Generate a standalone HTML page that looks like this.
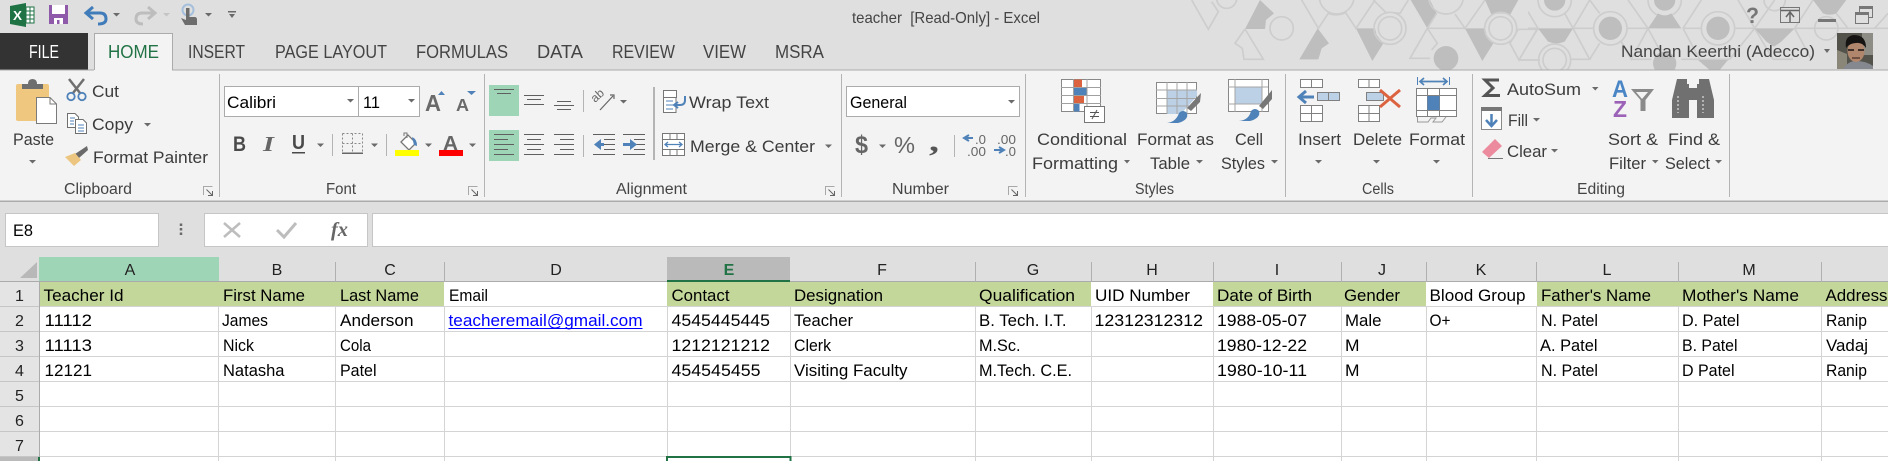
<!DOCTYPE html>
<html><head><meta charset="utf-8"><style>
html,body{margin:0;padding:0;background:#fff;width:1888px;height:461px;overflow:hidden}
svg{display:block;position:absolute;left:0;top:0}
text{font-family:"Liberation Sans",sans-serif;white-space:pre}
.r{font-size:17px;fill:#3c3c3c}
.g{font-size:15.5px;fill:#444}
.t{font-size:18px;fill:#444}
.c{font-size:17px;fill:#000}
.h{font-size:16px;fill:#222;text-anchor:middle}
</style></head><body>
<svg width="1888" height="461" viewBox="0 0 1888 461" xmlns="http://www.w3.org/2000/svg">
<rect width="1888" height="461" fill="#fff"/>
<rect width="1888" height="70" fill="#dfdfdf"/>

<!-- title pattern left -->
<svg x="1180" y="0" width="360" height="70" viewBox="0 0 1080 210">
<g fill="#bebebe">
<path d="M240 0L282 40L258 60L255 87H195ZM413 85L447 130L425 145L415 178H358ZM528 85H585L590 105L610 130L577 183ZM692 0H750L770 40L742 85ZM855 85H915L920 105L940 130L907 183ZM915 0H1015L990 45Q962 35 935 45Z"/>
<circle cx="798" cy="175" r="37"/>
</g>
<g fill="none" stroke="#cdcdcd" stroke-width="5">
<path d="M35 0L85 88L115 35L95 5M195 87L165 130L187 145L192 178H250L195 87M365 0L415 85L445 40Q470 50 497 38L528 85L585 0M580 0L620 40M640 38Q660 40 660 40L685 0M742 85H855M742 85L690 175H750M742 85L772 130L755 150M770 40L742 85M825 42L855 85L915 0M1015 88H1080M1015 88L990 130L1017 180L1070 90M1017 180H1080"/>
<circle cx="140" cy="-5" r="30"/>
<circle cx="305" cy="85" r="35"/>
<circle cx="470" cy="-10" r="52"/>
<circle cx="630" cy="85" r="35"/>
<circle cx="630" cy="85" r="48"/>
<circle cx="798" cy="-10" r="52"/>
<circle cx="962" cy="85" r="35"/>
<circle cx="962" cy="85" r="48"/>
</g>
</svg>
<!-- title pattern right -->
<svg x="1528" y="0" width="360" height="70" viewBox="0 0 1080 210">
<g fill="none" stroke="#cdcdcd" stroke-width="5">
<path d="M0 85H30M135 85H197M297 85H360M465 85H520M620 85H680M800 85H1080M30 85L0 35M30 85L0 135M135 85L110 40M135 85L185 0M135 85L185 178H125M185 178L215 130M185 0L215 40M280 125L310 178L360 85L410 178M310 178H370M300 0L360 85M465 85L520 0M465 85L515 178H460M515 178H605M605 178L680 85L735 178M735 178H795M630 0L680 85L740 0M800 85L850 178M800 85L855 0M925 40L960 85M1040 85L1080 40"/>
<circle cx="80" cy="0" r="50"/>
<circle cx="80" cy="180" r="35"/>
<circle cx="80" cy="180" r="48"/>
<circle cx="247" cy="85" r="50"/>
<circle cx="410" cy="0" r="50"/>
<circle cx="570" cy="85" r="50"/>
<circle cx="740" cy="0" r="32"/>
<circle cx="895" cy="85" r="35"/>
</g>
<g fill="#bebebe">
<circle cx="80" cy="0" r="32"/>
<circle cx="247" cy="85" r="35"/>
<circle cx="410" cy="0" r="32"/>
<circle cx="410" cy="190" r="35"/>
<circle cx="570" cy="85" r="35"/>
<path d="M30 85H135L110 125Q85 135 60 125ZM360 85H460L430 40Q410 52 390 40ZM680 85H800L760 125L738 140L715 125ZM855 0H955L925 40Q905 48 885 40ZM510 180H600L575 210H545Z"/>
</g>
</svg>

<!-- QAT -->
<path d="M10 6L26 3V27L10 24Z" fill="#1f7244"/>
<rect x="26" y="7" width="8" height="16" fill="#fff" stroke="#1f7244"/>
<path d="M26 11H34M26 15H34M26 19H34M30 7V23" stroke="#1f7244"/>
<text x="13" y="20" style="font-size:13px;font-weight:bold;fill:#fff" textLength="9" lengthAdjust="spacingAndGlyphs">X</text>
<rect x="49" y="5" width="19" height="19" fill="#8f5aa9"/>
<rect x="52" y="5" width="13" height="9" fill="#fff"/>
<rect x="54" y="18" width="9" height="6" fill="#fff"/><rect x="57" y="20" width="2.5" height="4" fill="#8f5aa9"/>
<path d="M93 7L86 13L93 19M87 13H100Q106 13 106 19Q106 24 98 24" fill="none" stroke="#3f7cb9" stroke-width="3"/>
<path d="M148 7L155 13L148 19M154 13H142Q136 13 136 19Q136 24 143 24" fill="none" stroke="#bdbdbd" stroke-width="3"/>
<circle cx="188" cy="10" r="5.5" fill="none" stroke="#a5c0dc" stroke-width="2"/>
<path d="M186 8h3.5v9h5q2.500 0 2.500 2.500V25H185L181 18L186 20Z" fill="#6d6d6d"/>
<rect x="228" y="11" width="8" height="1.500" fill="#6a6a6a"/>

<!-- tabs -->
<rect y="33" width="88" height="37" fill="#333"/>
<path d="M94.500 70V33.500H172.500V70" fill="#f3f3f3" stroke="#ababab"/>
<text class="t" x="29" y="58" textLength="30" lengthAdjust="spacingAndGlyphs" style="fill:#fff">FILE</text>
<text class="t" x="108" y="58" textLength="51" lengthAdjust="spacingAndGlyphs" style="fill:#217346">HOME</text>
<text class="t" x="188" y="58" textLength="57" lengthAdjust="spacingAndGlyphs">INSERT</text>
<text class="t" x="275" y="58" textLength="112" lengthAdjust="spacingAndGlyphs">PAGE LAYOUT</text>
<text class="t" x="416" y="58" textLength="92" lengthAdjust="spacingAndGlyphs">FORMULAS</text>
<text class="t" x="537" y="58" textLength="46" lengthAdjust="spacingAndGlyphs">DATA</text>
<text class="t" x="612" y="58" textLength="63" lengthAdjust="spacingAndGlyphs">REVIEW</text>
<text class="t" x="703" y="58" textLength="43" lengthAdjust="spacingAndGlyphs">VIEW</text>
<text class="t" x="775" y="58" textLength="49" lengthAdjust="spacingAndGlyphs">MSRA</text>

<text x="852" y="23" style="font-size:16px;fill:#444" textLength="188" lengthAdjust="spacingAndGlyphs">teacher  [Read-Only] - Excel</text>

<!-- window controls -->
<text x="1746" y="23" style="font-size:22px;font-weight:bold;fill:#777" textLength="13" lengthAdjust="spacingAndGlyphs">?</text>
<rect x="1780.500" y="7.500" width="19" height="15" fill="none" stroke="#777"/>
<path d="M1781 10.500H1799M1790 22V13M1786 17L1790 12L1794 17" fill="none" stroke="#666" stroke-width="1.500"/>
<rect x="1818" y="19" width="18" height="3" fill="#777"/>
<rect x="1859.500" y="6.500" width="13" height="11" fill="none" stroke="#777"/><rect x="1859" y="6" width="14" height="3" fill="#777"/>
<rect x="1855.500" y="12.500" width="13" height="11" fill="#dfdfdf" stroke="#777"/><rect x="1855" y="12" width="14" height="3" fill="#777"/>
<text x="1621" y="57" style="font-size:17px;fill:#444" textLength="194" lengthAdjust="spacingAndGlyphs">Nandan Keerthi (Adecco)</text>
<!-- avatar -->
<rect x="1837" y="33" width="36" height="36" fill="#54534b"/>
<rect x="1862" y="33" width="11" height="22" fill="#8d8d85"/>
<path d="M1837 50L1847 54V69H1837Z" fill="#8a8778"/>
<path d="M1843 69Q1848 61 1856 61Q1866 61 1873 66V69Z" fill="#85898f"/>
<ellipse cx="1856" cy="51" rx="8.500" ry="11" fill="#b0866c"/>
<path d="M1846 48Q1844 36 1854 35Q1866 35 1866 48Q1862 42 1856 43Q1850 43 1846 48Z" fill="#161412"/>
<path d="M1848 50H1854M1858 50H1864" stroke="#3c3028" stroke-width="2"/>
<path d="M1852 58H1860" stroke="#5d3f30" stroke-width="1.500"/>

<!-- ribbon -->
<rect y="70" width="1888" height="131" fill="#f3f3f3"/>
<rect x="172" y="69.500" width="1716" height="1" fill="#ababab"/>
<rect x="0" y="69.500" width="94" height="1" fill="#ababab"/>
<rect x="95" y="69" width="77" height="2" fill="#f3f3f3"/>
<rect y="200.500" width="1888" height="1.500" fill="#ababab"/>
<path d="M219.500 74V197M484.500 74V197M841.500 74V197M1025.500 74V197M1285.500 74V197M1472.500 74V197M1729.500 74V197" stroke="#b4b4b4"/>

<!-- clipboard group -->
<rect x="16" y="84" width="33" height="37" rx="2" fill="#efc77f"/>
<path d="M22 84H28Q28 79 32.500 79Q37 79 37 84H43V89H22Z" fill="#6e6e6e"/>
<path d="M36.500 97.500H50L56.500 104V123.500H36.500Z" fill="#fff" stroke="#7a7a7a"/>
<path d="M50 97.500V104H56.500" fill="none" stroke="#7a7a7a"/>
<text class="r" x="13" y="145" textLength="41" lengthAdjust="spacingAndGlyphs">Paste</text>
<path d="M73 93L84 79M80 93L69 79" stroke="#6f6f6f" stroke-width="2.500"/>
<circle cx="71" cy="96.500" r="3.700" fill="none" stroke="#4f82b8" stroke-width="1.800"/>
<circle cx="82" cy="96.500" r="3.700" fill="none" stroke="#4f82b8" stroke-width="1.800"/>
<text class="r" x="92" y="97" textLength="27" lengthAdjust="spacingAndGlyphs">Cut</text>
<path d="M67.500 113.500H75L78.500 117V127.500H67.500Z" fill="#fff" stroke="#6f6f6f"/>
<path d="M75.500 119.500H83L86.500 123V133.500H75.500Z" fill="#fff" stroke="#6f6f6f"/>
<path d="M70 118H75M70 121H74M70 124H74M78 125H84M78 128H84M78 131H84" stroke="#4f82b8"/>
<text class="r" x="92" y="130" textLength="41" lengthAdjust="spacingAndGlyphs">Copy</text>
<path d="M87 146L88 150L79 158L75 154Z" fill="#6a6a6a"/>
<path d="M65 157L75 153L81 160L74 166Z" fill="#ecc680"/>
<text class="r" x="93" y="163" textLength="115" lengthAdjust="spacingAndGlyphs">Format Painter</text>
<text class="g" x="64" y="194" textLength="68" lengthAdjust="spacingAndGlyphs">Clipboard</text>

<!-- font group -->
<rect x="224.500" y="86.500" width="134" height="30" fill="#fff" stroke="#ababab"/>
<rect x="358.500" y="86.500" width="61" height="30" fill="#fff" stroke="#ababab"/>
<text class="c" x="227" y="108" textLength="49" lengthAdjust="spacingAndGlyphs">Calibri</text>
<text class="c" x="363" y="108" textLength="17" lengthAdjust="spacingAndGlyphs">11</text>
<text x="425" y="111" style="font-size:23px;font-weight:bold;fill:#6a6a6a" textLength="16" lengthAdjust="spacingAndGlyphs">A</text>
<text x="456" y="111" style="font-size:17.500px;font-weight:bold;fill:#6a6a6a" textLength="13" lengthAdjust="spacingAndGlyphs">A</text>
<path d="M438 95H445L441.500 91ZM467 91H476L471.500 95Z" fill="#4f82b8"/>
<text x="233" y="151" style="font-size:21px;font-weight:bold;fill:#4a4a4a" textLength="13" lengthAdjust="spacingAndGlyphs">B</text>
<text x="263" y="151" style="font-size:21px;font-weight:bold;font-style:italic;fill:#666;font-family:'Liberation Serif',serif" textLength="11" lengthAdjust="spacingAndGlyphs">I</text>
<text x="292" y="149" style="font-size:20px;font-weight:bold;fill:#4a4a4a" textLength="13" lengthAdjust="spacingAndGlyphs">U</text>
<rect x="292" y="152" width="13" height="1.500" fill="#4a4a4a"/>
<path d="M332.500 134V156M386.500 134V156M583.500 90V112M583.500 135V157M954.500 135V157" stroke="#b4b4b4"/>
<path d="M342.500 133.500H362.500V152M342.500 133.500V152M342.500 143.500H362.500M352.500 133.500V152" fill="none" stroke="#888" stroke-dasharray="2 2"/>
<rect x="342" y="152.500" width="21" height="1.500" fill="#666"/>
<path d="M401 142L408 135L416 143L409 150Z" fill="#fff" stroke="#777" stroke-width="1.300"/>
<path d="M404 136V133H407V138" fill="none" stroke="#777"/>
<path d="M412 137Q417 139 417 146L414 145Z" fill="#4f82b8"/>
<rect x="395" y="150" width="24" height="6" fill="#ff0"/>
<text x="443" y="150" style="font-size:20px;font-weight:bold;fill:#666" textLength="15" lengthAdjust="spacingAndGlyphs">A</text>
<rect x="439" y="150" width="24" height="6" fill="#f00"/>
<text class="g" x="326" y="194" textLength="30" lengthAdjust="spacingAndGlyphs">Font</text>

<!-- alignment group -->
<rect x="489" y="85" width="30" height="31" fill="#9fd5b7"/>
<rect x="489" y="130" width="30" height="31" fill="#9fd5b7"/>
<path fill="none" stroke="#5f5f5f" d="M494 89.500H514M497 93.500H511M524 95.500H544M527 99.500H541M524 104.500H544M557 101.500H571M554 105.500H574M557 109.500H571
M494 134.500H514M494 139.500H508M494 144.500H514M494 149.500H508M494 154.500H514
M524 134.500H544M527 139.500H541M524 144.500H544M527 149.500H541M524 154.500H544
M554 134.500H574M560 139.500H574M554 144.500H574M560 149.500H574M554 154.500H574
M593 134.500H615M604 139.500H615M604 144.500H615M604 149.500H615M593 154.500H615
M623 134.500H645M634 139.500H645M634 144.500H645M634 149.500H645M623 154.500H645"/>
<path d="M601 139L594 144.500L601 150ZM601 143H604V146H601ZM630 139L637 144.500L630 150ZM623 143H630V146H623Z" fill="#4f82b8"/>
<path d="M600 110L613 96M610 95H614V99" fill="none" stroke="#666" stroke-width="1.200"/>
<text x="595" y="103" transform="rotate(-42 595 103)" style="font-size:12px;fill:#666">ab</text>
<rect x="653" y="87" width="2" height="73" fill="#b4b4b4"/>
<path d="M663.500 90.500H676.500V97.500H663.500ZM663.500 97.500H676V112.500H663.500Z" fill="#fff" stroke="#777"/>
<path d="M666 101H673M666 105H673M666 109H673" stroke="#4f82b8"/>
<path d="M685 96V100Q685 105 680 105H675M678 102L674 105L678 108" fill="none" stroke="#4f82b8" stroke-width="2"/>
<text class="r" x="689" y="108" textLength="80" lengthAdjust="spacingAndGlyphs">Wrap Text</text>
<rect x="662.500" y="133.500" width="22" height="22" fill="#fff" stroke="#777"/>
<path d="M662 139.500H685M662 149.500H685M670 133V139M677 133V139M670 150V156M677 150V156" stroke="#777"/>
<path d="M665 144.500H682M668 142L665 144.500L668 147M679 142L682 144.500L679 147" fill="none" stroke="#4f82b8" stroke-width="1.300"/>
<text class="r" x="690" y="152" textLength="125" lengthAdjust="spacingAndGlyphs">Merge &amp; Center</text>
<text class="g" x="616" y="194" textLength="71" lengthAdjust="spacingAndGlyphs">Alignment</text>

<!-- number group -->
<rect x="846.500" y="86.500" width="173" height="30" fill="#fff" stroke="#ababab"/>
<text class="c" x="850" y="108" textLength="57" lengthAdjust="spacingAndGlyphs">General</text>
<text x="855" y="153" style="font-size:25px;font-weight:bold;fill:#666" textLength="13" lengthAdjust="spacingAndGlyphs">$</text>
<text x="894" y="153" style="font-size:23px;fill:#666" textLength="21" lengthAdjust="spacingAndGlyphs">%</text>
<text x="929" y="151" style="font-size:30px;font-weight:bold;fill:#555;font-family:'Liberation Serif',serif" textLength="10" lengthAdjust="spacingAndGlyphs">,</text>
<text x="975" y="144" style="font-size:13px;fill:#666" textLength="11" lengthAdjust="spacingAndGlyphs">.0</text>
<text x="967" y="156" style="font-size:13px;fill:#666" textLength="19" lengthAdjust="spacingAndGlyphs">.00</text>
<text x="997" y="144" style="font-size:13px;fill:#666" textLength="19" lengthAdjust="spacingAndGlyphs">.00</text>
<text x="1005" y="156" style="font-size:13px;fill:#666" textLength="11" lengthAdjust="spacingAndGlyphs">.0</text>
<path d="M969 135L964 138L969 141M964 138H973M999 147L1004 150L999 153M994 150H1003" fill="none" stroke="#4f82b8" stroke-width="2"/>
<text class="g" x="892" y="194" textLength="57" lengthAdjust="spacingAndGlyphs">Number</text>

<!-- styles: conditional formatting -->
<rect x="1061.500" y="79.500" width="39" height="32" fill="#fff" stroke="#888"/>
<rect x="1074" y="79.500" width="8" height="8" fill="#dc6340"/>
<rect x="1074" y="88" width="13" height="7" fill="#4f82b8"/>
<rect x="1074" y="96" width="10" height="7.500" fill="#dc6340"/>
<rect x="1074" y="104" width="5.500" height="7.500" fill="#4f82b8"/>
<path d="M1061 87.500H1101M1061 95.500H1101M1061 103.500H1101M1073.500 79V112M1087 79V112" stroke="#a0a0a0"/>
<rect x="1084.500" y="106.500" width="20" height="16" fill="#fff" stroke="#777"/>
<path d="M1090 112.500H1099M1090 116.500H1099M1097 110L1092 119" stroke="#555"/>
<text class="r" x="1037" y="145" textLength="90" lengthAdjust="spacingAndGlyphs">Conditional</text>
<text class="r" x="1032" y="169" textLength="86" lengthAdjust="spacingAndGlyphs">Formatting</text>
<!-- format as table -->
<rect x="1156.500" y="82.500" width="40" height="31" fill="#fff" stroke="#888"/>
<path d="M1167 90H1197V96L1181 114H1167Z" fill="#bdd1e6"/>
<path d="M1156 90H1197M1156 98.500H1197M1156 106H1197M1167 82V114M1177 82V114M1187 82V114" stroke="#a5a5a5"/>
<path d="M1201 93L1187 108L1191 111L1200 102Z" fill="#777"/>
<path d="M1167 123Q1176 122 1179 113Q1183 109 1187 113Q1189 120 1178 123Z" fill="#4f82b8"/>
<text class="r" x="1137" y="145" textLength="77" lengthAdjust="spacingAndGlyphs">Format as</text>
<text class="r" x="1150" y="169" textLength="40" lengthAdjust="spacingAndGlyphs">Table</text>
<!-- cell styles -->
<rect x="1228.500" y="79.500" width="40" height="32" fill="#fff" stroke="#888"/>
<rect x="1235" y="87" width="27" height="17" fill="#bdd1e6"/>
<path d="M1228 87H1268M1228 104H1268M1235 79V112M1262 79V112" stroke="#a5a5a5"/>
<path d="M1272 90L1259 106L1263 109L1272 99Z" fill="#777"/>
<path d="M1239 121Q1249 120 1251 111Q1255 107 1259 111Q1261 118 1250 121Z" fill="#4f82b8"/>
<text class="r" x="1235" y="145" textLength="28" lengthAdjust="spacingAndGlyphs">Cell</text>
<text class="r" x="1221" y="169" textLength="44" lengthAdjust="spacingAndGlyphs">Styles</text>
<text class="g" x="1135" y="194" textLength="39" lengthAdjust="spacingAndGlyphs">Styles</text>

<!-- cells -->
<g fill="#fff" stroke="#808080">
<rect x="1300.500" y="79.500" width="22" height="8"/>
<rect x="1300.500" y="105.500" width="22" height="16"/>
<rect x="1317.500" y="92.500" width="22" height="8" fill="#bdd1e6"/>
<rect x="1358.500" y="79.500" width="21" height="8"/>
<rect x="1358.500" y="105.500" width="21" height="16"/>
<rect x="1366.500" y="92.500" width="17" height="8" fill="#bdd1e6"/>
<rect x="1416.500" y="88.500" width="40" height="28"/>
</g>
<path d="M1311.500 79V87M1300 113.500H1323M1311.500 105V122M1328.500 92V101M1369 79V87M1358 113.500H1380M1369 105V122M1417 95.500H1457M1417 110.500H1457M1427.500 88V117M1439.500 88V117" stroke="#808080"/>
<path d="M1306 91L1299 97L1306 103M1300 97H1314" fill="none" stroke="#4f82b8" stroke-width="3"/>
<path d="M1380 90L1400 107M1400 90L1380 107" stroke="#dc6340" stroke-width="3"/>
<rect x="1427.500" y="96" width="12" height="14" fill="#4f82b8"/>
<path d="M1417.500 77V85M1449.500 77V85" stroke="#4f82b8"/>
<path d="M1420 81.500H1447M1424 78L1420 81.500L1424 85M1443 78L1447 81.500L1443 85" fill="none" stroke="#4f82b8" stroke-width="1.700"/>
<path d="M1417.500 117V122H1428L1431 118H1436L1433 122H1442L1446 117" fill="none" stroke="#999"/>
<text class="r" x="1298" y="145" textLength="43" lengthAdjust="spacingAndGlyphs">Insert</text>
<text class="r" x="1353" y="145" textLength="49" lengthAdjust="spacingAndGlyphs">Delete</text>
<text class="r" x="1409" y="145" textLength="56" lengthAdjust="spacingAndGlyphs">Format</text>
<text class="g" x="1362" y="194" textLength="32" lengthAdjust="spacingAndGlyphs">Cells</text>

<!-- editing -->
<path d="M1499 80H1485L1493 88L1485 95.500H1500" fill="none" stroke="#555" stroke-width="3"/>
<text class="r" x="1507" y="95" textLength="74" lengthAdjust="spacingAndGlyphs">AutoSum</text>
<rect x="1481.500" y="107.500" width="20" height="22" fill="#fff" stroke="#8a8a8a"/>
<rect x="1481" y="107" width="21" height="4" fill="#777"/>
<path d="M1491.500 114V125M1486 120L1491.500 126L1497 120" fill="none" stroke="#4f82b8" stroke-width="2.500"/>
<text class="r" x="1508" y="126" textLength="20" lengthAdjust="spacingAndGlyphs">Fill</text>
<path d="M1482 152L1495 139L1502 146L1489 158Z" fill="#ec8b9d"/>
<path d="M1488 158.500H1503" stroke="#777"/>
<text class="r" x="1507" y="157" textLength="40" lengthAdjust="spacingAndGlyphs">Clear</text>
<text x="1612" y="97" style="font-size:24px;font-weight:bold;fill:#4a86c5" textLength="16" lengthAdjust="spacingAndGlyphs">A</text>
<text x="1613" y="117" style="font-size:23px;font-weight:bold;fill:#9b62b8" textLength="14" lengthAdjust="spacingAndGlyphs">Z</text>
<path d="M1631 89H1654L1645.500 100V111H1640.500V100ZM1636 92L1642 99L1648 92Z" fill="#8a8a8a" fill-rule="evenodd"/>
<path d="M1677 79H1687V84H1689V118H1672V100ZM1699 79H1709L1714 100V118H1697V84H1699ZM1689 88H1697V100H1689Z" fill="#707070"/>
<path d="M1678 96V113M1703 96V113" stroke="#f3f3f3" stroke-dasharray="2 2"/>
<text class="r" x="1608" y="145" textLength="50" lengthAdjust="spacingAndGlyphs">Sort &amp;</text>
<text class="r" x="1609" y="169" textLength="37" lengthAdjust="spacingAndGlyphs">Filter</text>
<text class="r" x="1668" y="145" textLength="52" lengthAdjust="spacingAndGlyphs">Find &amp;</text>
<text class="r" x="1665" y="169" textLength="45" lengthAdjust="spacingAndGlyphs">Select</text>
<text class="g" x="1577" y="194" textLength="48" lengthAdjust="spacingAndGlyphs">Editing</text>

<!-- launchers -->
<path fill="none" stroke="#a8a8a8" d="M203.500 195V186.500H212.500M468.500 195V186.500H477.500M825.500 195V186.500H834.500M1008.500 195V186.500H1017.500"/>
<path fill="none" stroke="#666" d="M206.500 189.500L212 195M212.500 191V195.500H208M471.500 189.500L477 195M477.500 191V195.500H473M828.500 189.500L834 195M834.500 191V195.500H830M1011.500 189.500L1017 195M1017.500 191V195.500H1013"/>

<!-- dropdown arrows -->
<path fill="#6a6a6a" d="M113 13h7l-3.500 3.500zM205 13h7l-3.500 3.500zM229 14h6l-3 4zM29 160h7l-3.500 3.500zM144 123h7l-3.500 3.500zM347 99h7l-3.500 3.500zM408 99h7l-3.500 3.500zM317 143.500h7l-3.500 3.500zM371 143.500h7l-3.500 3.500zM425 143.500h7l-3.500 3.500zM469 143.500h7l-3.500 3.500zM620 100h7l-3.500 3.500zM825 144.500h7l-3.500 3.500zM1008 100h7l-3.500 3.500zM879 144.500h7l-3.500 3.500zM1124 160h6l-3 3.500zM1196 160h7l-3.500 3.500zM1271 160h7l-3.500 3.500zM1315 160h7l-3.500 3.500zM1373 160h7l-3.500 3.500zM1433 160h7l-3.500 3.500zM1592 87h6.500l-3.250 3.500zM1533 118h7l-3.500 3.500zM1551 149h7l-3.500 3.500zM1652 160h6.500l-3.250 3.500zM1715 160h7l-3.500 3.500zM1824 49h6l-3 4zM141 228h7l-3.500 3.500z"/>
<path fill="#c4c4c4" d="M163 13h7l-3.500 3.500z"/>

<!-- formula bar -->
<rect y="202" width="1888" height="55" fill="#dfdfdf"/>
<rect x="5.500" y="213.500" width="153" height="33" fill="#fff" stroke="#c6c6c6"/>
<rect x="204.500" y="213.500" width="163" height="33" fill="#fff" stroke="#c6c6c6"/>
<rect x="372.500" y="213.500" width="1520" height="33" fill="#fff" stroke="#c6c6c6"/>
<text class="c" x="13" y="236" textLength="20" lengthAdjust="spacingAndGlyphs">E8</text>
<path d="M181 223.500v2.500M181 228v2.500M181 232.500v2.500" stroke="#6a6a6a" stroke-width="2.500"/>
<path d="M224 223L240 237M240 223L224 237" stroke="#bdbdbd" stroke-width="2.500"/>
<path d="M277 230L284 237L296 223" fill="none" stroke="#bdbdbd" stroke-width="3"/>
<text x="331" y="236" style="font-size:20px;font-weight:bold;font-style:italic;fill:#666;font-family:'Liberation Serif',serif" textLength="17" lengthAdjust="spacingAndGlyphs">fx</text>

<!-- headers -->
<rect y="257" width="1888" height="25" fill="#dfdfdf"/>
<rect x="0" y="282" width="39" height="179" fill="#e4e4e4"/>
<rect x="39" y="257" width="180" height="25" fill="#9fd5b7"/>
<rect x="667" y="257" width="123" height="25" fill="#bababa"/>
<path d="M37 262V278H20Z" fill="#b8b8b8"/>
<rect y="281" width="1888" height="1" fill="#ababab"/>
<rect x="667" y="280" width="123" height="2" fill="#217346"/>
<path stroke="#b0b0b0" d="M335.500 262V282M444.500 262V282M975.500 262V282M1091.500 262V282M1213.500 262V282M1341.500 262V282M1426.500 262V282M1536.500 262V282M1678.500 262V282M1821.500 262V282"/>

<!-- green cells -->
<rect x="40" y="282" width="404" height="25" fill="#c4d79b"/>
<rect x="667" y="282" width="424" height="25" fill="#c4d79b"/>
<rect x="1213" y="282" width="213" height="25" fill="#c4d79b"/>
<rect x="1537" y="282" width="351" height="25" fill="#c4d79b"/>

<!-- gridlines -->
<path stroke="#d4d4d4" d="M39 331.500H1888M39 356.500H1888M39 381.500H1888M39 406.500H1888M39 431.500H1888M39 456.500H1888M39 306.500H1888
M218.500 307V461M335.500 307V461M444.500 307V461M667.500 307V461M790.500 307V461M975.500 307V461M1091.500 307V461M1213.500 307V461M1341.500 307V461M1426.500 307V461M1536.500 307V461M1678.500 307V461M1821.500 307V461"/>
<path stroke="#c6c6c6" d="M0 306.500H39M0 331.500H39M0 356.500H39M0 381.500H39M0 406.500H39M0 431.500H39M0 456.500H39"/>
<rect x="39" y="282" width="1" height="179" fill="#ababab"/>
<rect x="0" y="457" width="39" height="4" fill="#bababa"/>
<rect x="38" y="457" width="2" height="4" fill="#217346"/>
<rect x="666.500" y="456" width="124" height="2" fill="#217346"/>
<rect x="666" y="456" width="2" height="5" fill="#217346"/>
<rect x="789.500" y="456" width="2" height="5" fill="#217346"/>

<!-- col letters -->
<text class="h" x="130" y="275">A</text><text class="h" x="277" y="275">B</text><text class="h" x="390" y="275">C</text><text class="h" x="556" y="275">D</text>
<text class="h" x="729" y="275" style="fill:#217346;font-weight:bold">E</text><text class="h" x="882" y="275">F</text><text class="h" x="1033" y="275">G</text><text class="h" x="1152" y="275">H</text><text class="h" x="1277" y="275">I</text><text class="h" x="1382" y="275">J</text><text class="h" x="1481" y="275">K</text><text class="h" x="1607" y="275">L</text><text class="h" x="1749" y="275">M</text>
<!-- row numbers -->
<text class="h" x="19.500" y="301">1</text><text class="h" x="19.500" y="326">2</text><text class="h" x="19.500" y="351">3</text><text class="h" x="19.500" y="376">4</text><text class="h" x="19.500" y="401">5</text><text class="h" x="19.500" y="426">6</text><text class="h" x="19.500" y="451">7</text>

<!-- row 1 -->
<text class="c" x="43.500" y="301" textLength="80" lengthAdjust="spacingAndGlyphs">Teacher Id</text>
<text class="c" x="223" y="301" textLength="82" lengthAdjust="spacingAndGlyphs">First Name</text>
<text class="c" x="340" y="301" textLength="79" lengthAdjust="spacingAndGlyphs">Last Name</text>
<text class="c" x="449" y="301" textLength="39" lengthAdjust="spacingAndGlyphs">Email</text>
<text class="c" x="671.500" y="301" textLength="58" lengthAdjust="spacingAndGlyphs">Contact</text>
<text class="c" x="794" y="301" textLength="89" lengthAdjust="spacingAndGlyphs">Designation</text>
<text class="c" x="979" y="301" textLength="96" lengthAdjust="spacingAndGlyphs">Qualification</text>
<text class="c" x="1095" y="301" textLength="95" lengthAdjust="spacingAndGlyphs">UID Number</text>
<text class="c" x="1217" y="301" textLength="95" lengthAdjust="spacingAndGlyphs">Date of Birth</text>
<text class="c" x="1344" y="301" textLength="56" lengthAdjust="spacingAndGlyphs">Gender</text>
<text class="c" x="1429.500" y="301" textLength="96" lengthAdjust="spacingAndGlyphs">Blood Group</text>
<text class="c" x="1541" y="301" textLength="110" lengthAdjust="spacingAndGlyphs">Father's Name</text>
<text class="c" x="1682" y="301" textLength="117" lengthAdjust="spacingAndGlyphs">Mother's Name</text>
<text class="c" x="1825.500" y="301" textLength="62" lengthAdjust="spacingAndGlyphs">Address</text>
<!-- row 2 -->
<text class="c" x="44.500" y="326" textLength="47.500" lengthAdjust="spacingAndGlyphs">11112</text>
<text class="c" x="222" y="326" textLength="46" lengthAdjust="spacingAndGlyphs">James</text>
<text class="c" x="340" y="326" textLength="73.500" lengthAdjust="spacingAndGlyphs">Anderson</text>
<text class="c" x="448.500" y="326" textLength="194" lengthAdjust="spacingAndGlyphs" style="fill:#00f">teacheremail@gmail.com</text>
<rect x="448.500" y="328" width="194" height="1" fill="#00f"/>
<text class="c" x="671.500" y="326" textLength="98.500" lengthAdjust="spacingAndGlyphs">4545445445</text>
<text class="c" x="794" y="326" textLength="59" lengthAdjust="spacingAndGlyphs">Teacher</text>
<text class="c" x="979" y="326" textLength="87.500" lengthAdjust="spacingAndGlyphs">B. Tech. I.T.</text>
<text class="c" x="1094.500" y="326" textLength="108.500" lengthAdjust="spacingAndGlyphs">12312312312</text>
<text class="c" x="1217" y="326" textLength="90" lengthAdjust="spacingAndGlyphs">1988-05-07</text>
<text class="c" x="1345" y="326" textLength="36.500" lengthAdjust="spacingAndGlyphs">Male</text>
<text class="c" x="1429.500" y="326" textLength="21" lengthAdjust="spacingAndGlyphs">O+</text>
<text class="c" x="1541" y="326" textLength="57" lengthAdjust="spacingAndGlyphs">N. Patel</text>
<text class="c" x="1682" y="326" textLength="57.500" lengthAdjust="spacingAndGlyphs">D. Patel</text>
<text class="c" x="1826" y="326" textLength="41" lengthAdjust="spacingAndGlyphs">Ranip</text>
<!-- row 3 -->
<text class="c" x="44.500" y="351" textLength="47.500" lengthAdjust="spacingAndGlyphs">11113</text>
<text class="c" x="223" y="351" textLength="31" lengthAdjust="spacingAndGlyphs">Nick</text>
<text class="c" x="340" y="351" textLength="31" lengthAdjust="spacingAndGlyphs">Cola</text>
<text class="c" x="671.500" y="351" textLength="98.500" lengthAdjust="spacingAndGlyphs">1212121212</text>
<text class="c" x="794" y="351" textLength="37" lengthAdjust="spacingAndGlyphs">Clerk</text>
<text class="c" x="979" y="351" textLength="41.500" lengthAdjust="spacingAndGlyphs">M.Sc.</text>
<text class="c" x="1217" y="351" textLength="90" lengthAdjust="spacingAndGlyphs">1980-12-22</text>
<text class="c" x="1345" y="351" textLength="14.500" lengthAdjust="spacingAndGlyphs">M</text>
<text class="c" x="1540" y="351" textLength="57.500" lengthAdjust="spacingAndGlyphs">A. Patel</text>
<text class="c" x="1682" y="351" textLength="55.500" lengthAdjust="spacingAndGlyphs">B. Patel</text>
<text class="c" x="1826" y="351" textLength="42" lengthAdjust="spacingAndGlyphs">Vadaj</text>
<!-- row 4 -->
<text class="c" x="44.500" y="376" textLength="47.500" lengthAdjust="spacingAndGlyphs">12121</text>
<text class="c" x="223" y="376" textLength="61.500" lengthAdjust="spacingAndGlyphs">Natasha</text>
<text class="c" x="340" y="376" textLength="36.500" lengthAdjust="spacingAndGlyphs">Patel</text>
<text class="c" x="671.500" y="376" textLength="89" lengthAdjust="spacingAndGlyphs">454545455</text>
<text class="c" x="794" y="376" textLength="113.500" lengthAdjust="spacingAndGlyphs">Visiting Faculty</text>
<text class="c" x="979" y="376" textLength="93" lengthAdjust="spacingAndGlyphs">M.Tech. C.E.</text>
<text class="c" x="1217" y="376" textLength="90" lengthAdjust="spacingAndGlyphs">1980-10-11</text>
<text class="c" x="1345" y="376" textLength="14.500" lengthAdjust="spacingAndGlyphs">M</text>
<text class="c" x="1541" y="376" textLength="57" lengthAdjust="spacingAndGlyphs">N. Patel</text>
<text class="c" x="1682" y="376" textLength="52.500" lengthAdjust="spacingAndGlyphs">D Patel</text>
<text class="c" x="1826" y="376" textLength="41" lengthAdjust="spacingAndGlyphs">Ranip</text>
</svg>
</body></html>
